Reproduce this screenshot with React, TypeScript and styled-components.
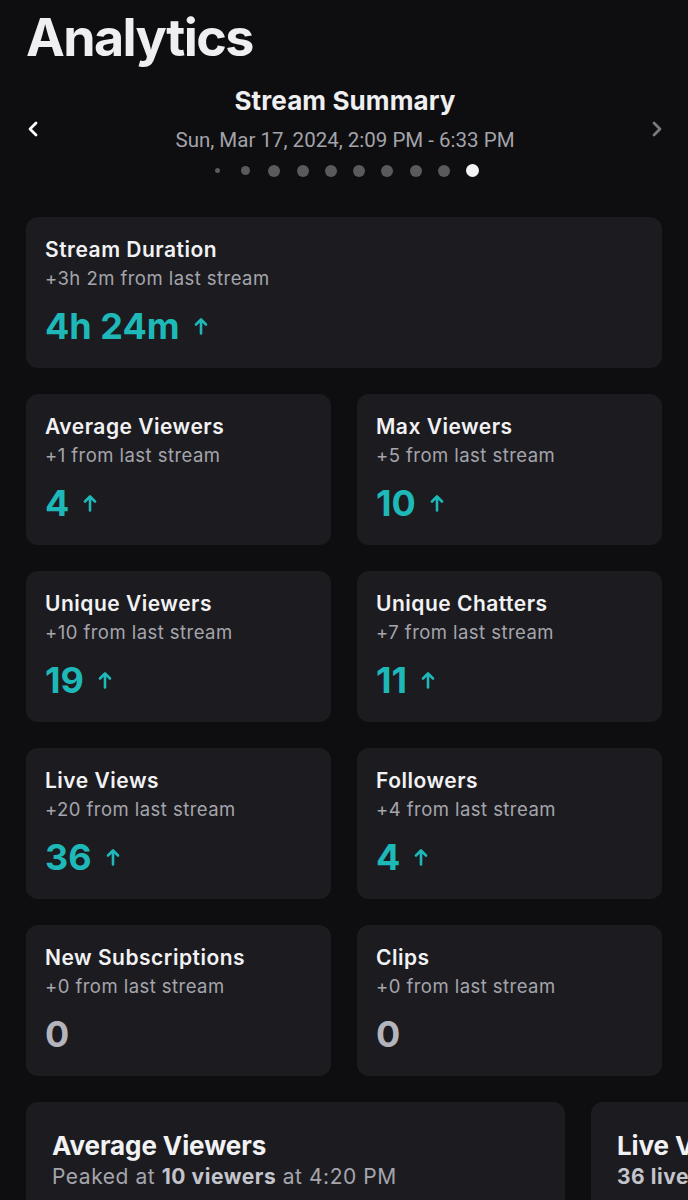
import React from 'react';
import styled, { createGlobalStyle } from 'styled-components';

const GlobalStyle = createGlobalStyle`
  * { box-sizing: border-box; }
  html, body { margin: 0; padding: 0; background: #0e0e10; }
  body {
    font-family: Inter, "Noto Sans", sans-serif;
    color: #efeff1;
    -webkit-font-smoothing: antialiased;
  }
`;

const Page = styled.main`
  width: 688px;
  height: 1200px;
  overflow: hidden;
  padding: 7px 0 0;
  background: #0e0e10;
`;

const PageTitle = styled.h1`
  margin: 0;
  padding: 0 26px;
  font-size: 52px;
  line-height: 62px;
  font-weight: 700;
  letter-spacing: -1.6px;
  color: #efeff1;
`;

const SummaryHeader = styled.header`
  display: flex;
  align-items: center;
  justify-content: space-between;
  padding: 16px 24px 0 26px;
`;

const NavBtn = styled.button<{ $dim?: boolean }>`
  width: 14px;
  height: 18px;
  padding: 0;
  border: 0;
  background: none;
  display: flex;
  align-items: center;
  justify-content: center;
  color: ${(p) => (p.$dim ? '#7a7a80' : '#ffffff')};
  margin-top: -4px;
`;

const SummaryCenter = styled.div`
  display: flex;
  flex-direction: column;
  align-items: center;
`;

const SummaryTitle = styled.h2`
  margin: 0;
  font-size: 26px;
  line-height: 32px;
  font-weight: 700;
  letter-spacing: 0.1px;
  color: #efeff1;
`;

const SummaryDate = styled.p`
  margin: 11px 0 0;
  font-family: Roboto, "Liberation Sans", sans-serif;
  font-size: 20.5px;
  line-height: 24px;
  color: #a3a3aa;
`;

const Dots = styled.div`
  display: flex;
  align-items: center;
  height: 13px;
  margin-top: 12px;
`;

const DotSlot = styled.span`
  width: 28.3px;
  display: flex;
  justify-content: center;
`;

const Dot = styled.span<{ $size: number; $active?: boolean }>`
  width: ${(p) => p.$size}px;
  height: ${(p) => p.$size}px;
  border-radius: 50%;
  background: ${(p) => (p.$active ? '#f4f4f6' : '#5a5a5e')};
`;

const Content = styled.section`
  padding: 40px 26px 0;
  display: flex;
  flex-direction: column;
  gap: 26px;
`;

const Grid = styled.div`
  display: grid;
  grid-template-columns: 1fr 1fr;
  gap: 26px;
`;

const StatCard = styled.div`
  background: #1c1c20;
  border-radius: 12px;
  height: 151px;
  padding: 21px 19px 0;
`;

const StatTitle = styled.h3`
  margin: 0;
  font-size: 21px;
  line-height: 24px;
  font-weight: 600;
  letter-spacing: 0.5px;
  color: #f2f2f4;
`;

const StatDelta = styled.p`
  margin: 4px 0 0;
  font-size: 18.5px;
  line-height: 24px;
  letter-spacing: 0.45px;
  color: #a5a5ad;
`;

const ValueRow = styled.div<{ $up?: boolean }>`
  display: flex;
  align-items: center;
  gap: 14px;
  margin-top: 15px;
  height: 42px;
  color: ${(p) => (p.$up ? '#1eb8b8' : '#b4b4bc')};
`;

const Value = styled.span`
  font-size: 36px;
  line-height: 42px;
  font-weight: 700;
  letter-spacing: 0;
`;

const Carousel = styled.div`
  display: flex;
  gap: 26px;
  overflow: hidden;
  margin: 0 -26px;
  padding: 0 26px;
`;

const ChartCard = styled.div`
  flex: 0 0 539px;
  height: 200px;
  background: #1c1c20;
  border-radius: 12px;
  padding: 28px 26px 0;
  overflow: hidden;
`;

const ChartTitle = styled.h3`
  margin: 0;
  font-size: 26px;
  line-height: 32px;
  font-weight: 700;
  letter-spacing: -0.1px;
  white-space: nowrap;
  color: #f2f2f4;
`;

const ChartSub = styled.p`
  margin: 2px 0 0;
  font-size: 21px;
  line-height: 26px;
  letter-spacing: 0.55px;
  white-space: nowrap;
  color: #a5a5ad;

  b {
    font-weight: 700;
    color: #c4c4cc;
  }
`;

const Chevron = ({ dir }: { dir: 'left' | 'right' }) => (
  <svg width="12" height="16" viewBox="0 0 12 16" fill="none">
    <path
      d={dir === 'left' ? 'M9 2 L3 8 L9 14' : 'M3 2 L9 8 L3 14'}
      stroke="currentColor"
      strokeWidth="2.8"
      strokeLinecap="round"
      strokeLinejoin="round"
    />
  </svg>
);

const UpArrow = () => (
  <svg width="14" height="18" viewBox="0 0 14 18" fill="none">
    <path d="M7 16.5 V2.5 M2 7.5 L7 2.5 L12 7.5" stroke="currentColor" strokeWidth="2.6" strokeLinecap="round" strokeLinejoin="round" />
  </svg>
);

const DOT_SIZES = [5, 9, 12, 12, 12, 12, 12, 12, 12, 13];

const STATS = [
  { title: 'Average Viewers', delta: '+1 from last stream', value: '4', up: true },
  { title: 'Max Viewers', delta: '+5 from last stream', value: '10', up: true },
  { title: 'Unique Viewers', delta: '+10 from last stream', value: '19', up: true },
  { title: 'Unique Chatters', delta: '+7 from last stream', value: '11', up: true },
  { title: 'Live Views', delta: '+20 from last stream', value: '36', up: true },
  { title: 'Followers', delta: '+4 from last stream', value: '4', up: true },
  { title: 'New Subscriptions', delta: '+0 from last stream', value: '0', up: false },
  { title: 'Clips', delta: '+0 from last stream', value: '0', up: false },
];

function Stat({ title, delta, value, up }: { title: string; delta: string; value: string; up: boolean }) {
  return (
    <StatCard>
      <StatTitle>{title}</StatTitle>
      <StatDelta>{delta}</StatDelta>
      <ValueRow $up={up}>
        <Value>{value}</Value>
        {up && <UpArrow />}
      </ValueRow>
    </StatCard>
  );
}

export default function App() {
  return (
    <>
      <GlobalStyle />
      <Page>
        <PageTitle>Analytics</PageTitle>
        <SummaryHeader>
          <NavBtn aria-label="Previous stream">
            <Chevron dir="left" />
          </NavBtn>
          <SummaryCenter>
            <SummaryTitle>Stream Summary</SummaryTitle>
            <SummaryDate>Sun, Mar 17, 2024, 2:09 PM - 6:33 PM</SummaryDate>
            <Dots>
              {DOT_SIZES.map((s, i) => (
                <DotSlot key={i}>
                  <Dot $size={s} $active={i === DOT_SIZES.length - 1} />
                </DotSlot>
              ))}
            </Dots>
          </SummaryCenter>
          <NavBtn $dim aria-label="Next stream">
            <Chevron dir="right" />
          </NavBtn>
        </SummaryHeader>

        <Content>
          <Stat title="Stream Duration" delta="+3h 2m from last stream" value="4h 24m" up />
          <Grid>
            {STATS.map((s) => (
              <Stat key={s.title} {...s} />
            ))}
          </Grid>
          <Carousel>
            <ChartCard>
              <ChartTitle>Average Viewers</ChartTitle>
              <ChartSub>
                Peaked at <b>10 viewers</b> at 4:20 PM
              </ChartSub>
            </ChartCard>
            <ChartCard>
              <ChartTitle>Live Views</ChartTitle>
              <ChartSub>
                <b>36 live views</b> this stream
              </ChartSub>
            </ChartCard>
          </Carousel>
        </Content>
      </Page>
    </>
  );
}
